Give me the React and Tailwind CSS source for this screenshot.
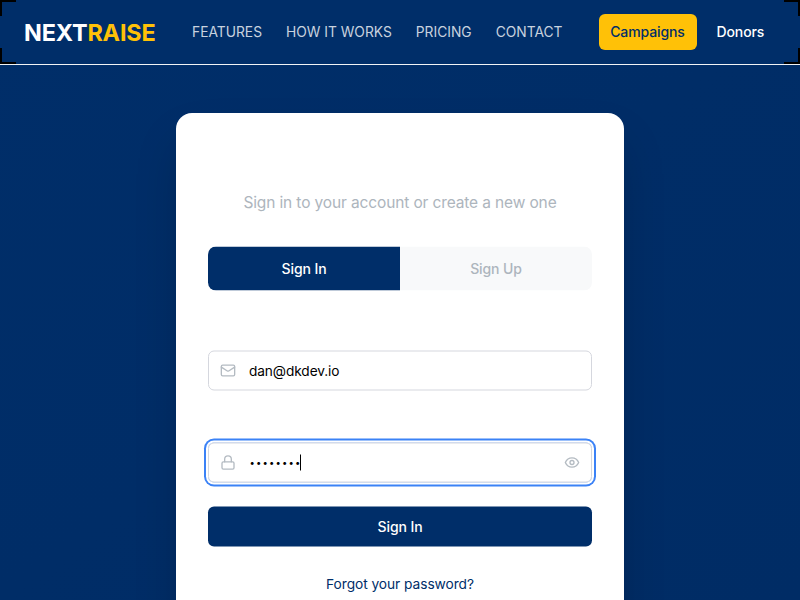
import React from "react";
import { Mail, Lock } from "lucide-react";

const links = ["FEATURES", "HOW IT WORKS", "PRICING", "CONTACT"];

function EyeIcon() {
  return (
    <svg viewBox="0 0 24 24" fill="none" stroke="currentColor" strokeWidth="2" strokeLinecap="round" strokeLinejoin="round" className="ml-auto size-4 text-[#b4bbc2]">
      <path d="M2 12s3-7 10-7 10 7 10 7-3 7-10 7-10-7-10-7Z" />
      <circle cx="12" cy="12" r="3" />
    </svg>
  );
}

function Header() {
  return (
    <header className="relative flex h-[65px] shrink-0 items-center border-b border-[#f1f3f5] bg-[#002e69] pl-6">
      <span className="absolute left-0 top-0 size-4 border-l-2 border-t-2 border-black" />
      <span className="absolute right-0 top-0 size-4 border-r-2 border-t-2 border-black" />
      <span className="absolute bottom-0 left-0 size-4 border-b-2 border-l-2 border-black" />
      <span className="absolute bottom-0 right-0 size-4 border-b-2 border-r-2 border-black" />
      <a className="w-[168px] pt-0.5 text-[23.4px] leading-8 font-bold tracking-[-0.15px] text-white">
        NEXT<span className="text-[#ffc107]">RAISE</span>
      </a>
      <nav className="flex w-[406.5px] gap-6 whitespace-nowrap text-[13.8px] leading-5 tracking-[0px] text-[#c8d2df]">
        {links.map((l) => (
          <a key={l}>{l}</a>
        ))}
      </nav>
      <div className="flex items-center gap-2 text-sm font-medium tracking-[-0.1px]">
        <button className="h-9 w-[98px] rounded-md bg-[#ffc107] text-[#002e69]">Campaigns</button>
        <button className="h-9 px-3 text-white">Donors</button>
      </div>
    </header>
  );
}

export default function App() {
  return (
    <div className="flex h-[600px] w-[800px] flex-col overflow-hidden bg-linear-to-br from-[#002e69] to-[#002c65] font-['Inter',sans-serif]">
      <Header />
      <main className="flex justify-center pt-12">
        <section className="flex h-[560px] w-[448px] flex-col rounded-2xl bg-white px-8 shadow-2xl">
          <p className="mt-[78px] text-center text-[15.5px] leading-6 tracking-[-0.13px] text-[#adb5bd]">
            Sign in to your account or create a new one
          </p>
          <div className="translate-y-[0.5px]">
            <div className="mt-[31px] flex h-11 overflow-hidden rounded-lg text-sm font-medium tracking-[-0.1px]">
              <button className="flex-1 bg-[#002e69] text-white">Sign In</button>
              <button className="flex-1 bg-[#f8f9fa] text-[#adb5bd]">Sign Up</button>
            </div>
            <div className="mt-15 flex h-10 items-center rounded-md border border-[#d5d7de] px-[11px] text-sm text-black">
              <Mail className="size-4 text-[#b4bbc2]" />
              <span className="ml-[13px] text-[13.7px] leading-5 tracking-[-0.1px]">dan@dkdev.io</span>
            </div>
            <div className="mt-13 flex h-10 items-center rounded-md border border-[#d5d7de] px-[11px] text-sm text-black ring-2 ring-[#3b82f6] ring-offset-2">
              <Lock className="size-4 text-[#b4bbc2]" />
              <span className="ml-[13.5px] w-[50.5px] whitespace-nowrap text-[9.5px] tracking-[1.17px]">••••••••</span>
              <span className="h-4 w-px bg-black" />
              <EyeIcon />
            </div>
            <button className="mt-6 h-10 w-full rounded-md bg-[#002e69] text-sm font-medium tracking-[-0.1px] text-white">
              Sign In
            </button>
            <p className="mt-[27px] text-center text-[13.75px] leading-5 tracking-[-0.06px] text-[#002e69]">Forgot your password?</p>
          </div>
        </section>
      </main>
    </div>
  );
}
